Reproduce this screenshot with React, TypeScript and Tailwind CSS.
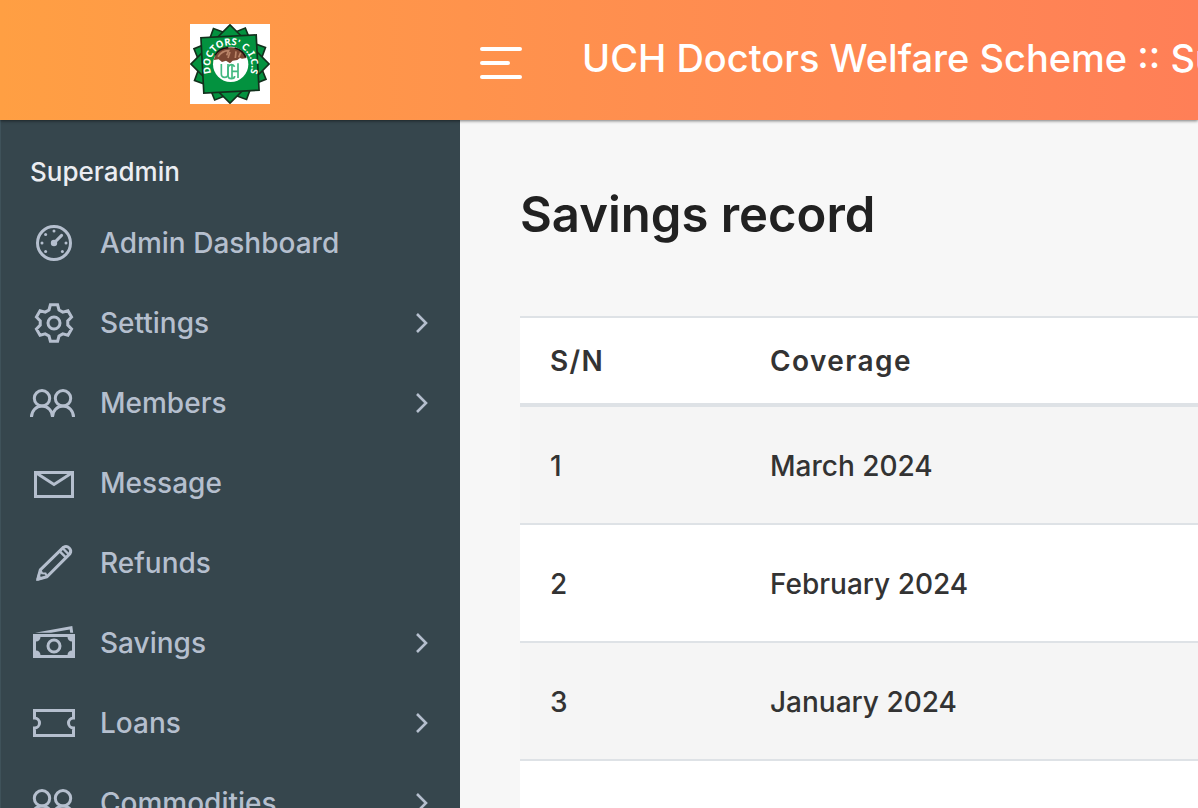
import type { ReactNode } from "react";

type NavItem = {
  label: string;
  icon: ReactNode;
  hasChildren?: boolean;
};

type SavingsRow = {
  sn: number;
  coverage: string;
};

// One tooth per 60 degrees, drawn clockwise from the top
const GEAR_POINTS = [0, 60, 120, 180, 240, 300]
  .flatMap((deg) => {
    const a = (deg * Math.PI) / 180;
    return [
      [-5, 13],
      [-3.6, 18.2],
      [3.6, 18.2],
      [5, 13],
    ].map(([t, r]) => {
      const x = 24 + t * Math.cos(a) + r * Math.sin(a);
      const y = 24 + t * Math.sin(a) - r * Math.cos(a);
      return `${x.toFixed(2)},${y.toFixed(2)}`;
    });
  })
  .join(" ");

function Icon({ children }: { children: ReactNode }) {
  return (
    <svg
      viewBox="0 0 48 48"
      className="size-12 shrink-0"
      fill="none"
      stroke="currentColor"
      strokeWidth="3"
      aria-hidden="true"
    >
      {children}
    </svg>
  );
}

function GaugeIcon() {
  return (
    <Icon>
      <circle cx="24" cy="24" r="16.5" />
      <path d="M24 24 31.6 16.4" strokeLinecap="round" />
      <g fill="currentColor" stroke="none">
        <circle cx="24" cy="24" r="3.2" />
        <circle cx="24" cy="12" r="1.5" />
        <circle cx="12" cy="24" r="1.5" />
        <circle cx="36" cy="24" r="1.5" />
        <circle cx="15.6" cy="15.6" r="1.5" />
        <circle cx="15.6" cy="32.4" r="1.5" />
        <circle cx="32.4" cy="32.4" r="1.5" />
      </g>
    </Icon>
  );
}

function GearIcon() {
  return (
    <Icon>
      <polygon points={GEAR_POINTS} />
      <circle cx="24" cy="24" r="6" />
    </Icon>
  );
}

function PeopleIcon() {
  return (
    <Icon>
      <circle cx="12" cy="19.3" r="7.7" />
      <circle cx="33" cy="19.3" r="7.7" />
      <path d="M1.5 38a10.5 11 0 0 1 21 0a10.5 11 0 0 1 21 0" strokeLinejoin="bevel" />
    </Icon>
  );
}

function MailIcon() {
  return (
    <Icon>
      <rect x="5.5" y="13.5" width="37" height="24" />
      <path d="M5.5 13.5 24 25.5l18.5-12" />
    </Icon>
  );
}

function PencilIcon() {
  return (
    <Icon>
      <path d="M7.8 40.2 10.3 30.8 33.6 8.2a4.7 4.7 0 0 1 6.4 6.4L17 37.7Z" strokeLinejoin="round" />
      <path d="m29.5 12.2 6.5 6.5M33 9.5l5.8 5.8" strokeWidth="2.4" />
      <path d="m10.3 30.8 1.8 3.5 3.4.2 1.5 3.2" strokeWidth="2" />
      <path d="M6 42l2-7 5 5Z" fill="currentColor" stroke="none" />
    </Icon>
  );
}

function CashIcon() {
  return (
    <Icon>
      <path
        d="M3 15h42v24H3ZM10.5 18a4.5 4.5 0 0 1-4.5 4.5v9a4.5 4.5 0 0 1 4.5 4.5h27a4.5 4.5 0 0 1 4.5-4.5v-9a4.5 4.5 0 0 1-4.5-4.5Z"
        fill="currentColor"
        fillRule="evenodd"
        stroke="none"
      />
      <circle cx="24" cy="27" r="6" />
      <path d="M5 13.8 42.3 7l.9 6.8h-3l-.5-3.3L21 13.8Z" fill="currentColor" stroke="none" />
    </Icon>
  );
}

function TicketIcon() {
  return (
    <Icon>
      <path d="M4.5 11.5h39V19a5 5 0 0 0 0 10v7.5h-39V29a5 5 0 0 0 0-10Z" />
    </Icon>
  );
}

function Chevron() {
  return (
    <svg viewBox="0 0 12 20" className="h-5 w-3 shrink-0" fill="none" stroke="currentColor" strokeWidth="2.6" aria-hidden="true">
      <path d="m1 1 9 9-9 9" />
    </svg>
  );
}

function Logo() {
  return (
    <svg viewBox="0 0 240 240" className="size-20 bg-white" role="img" aria-label="Doctors' C.I.C.S">
      <g fill="#03923f" stroke="#12301c" strokeWidth="5">
        <rect x="37" y="37" width="166" height="166" transform="rotate(20 120 120)" />
        <rect x="37" y="37" width="166" height="166" transform="rotate(68 120 120)" />
        <rect x="37" y="37" width="166" height="166" transform="rotate(45 120 120)" />
        <rect x="37" y="37" width="166" height="166" transform="rotate(-3 120 120)" />
      </g>
      <circle cx="122" cy="121" r="53" fill="#fff" />
      <path
        d="M73 102C82 82 98 71 122 70c24 0 42 12 48 32l-14 2-6-2-8 6-14 2-8 8-12-8-12 4-10-8-14 2Z"
        fill="#7a4632"
      />
      <path d="M84 98c8-12 20-18 32-18l-6 14M120 84l-6 18M138 82l-2 20M152 86l-6 14" fill="none" stroke="#b98468" strokeWidth="5" />
      <path d="M75 94c8-14 20-22 40-23M134 72c16 4 28 14 33 28" fill="none" stroke="#1d1210" strokeWidth="5" />
      <g fill="none" stroke="#43b981" strokeWidth="5">
        <path d="M94 120v30q0 10 10 10t10-10v-30" />
        <path d="M134 128q-4-6-10-6t-10 8v24q0 10 10 10t10-8" />
        <path d="M126 120v44M144 118v44M126 142h18" />
      </g>
      <path id="logo-arc" d="M64 147A62 62 0 1 1 180 147" fill="none" />
      <text className="font-['Noto_Sans'] text-[29px] font-bold" fill="#fff" textAnchor="middle">
        <textPath href="#logo-arc" startOffset="50%">
          DOCTORS&apos; C.I.C.S
        </textPath>
      </text>
    </svg>
  );
}

const NAV_ITEMS: NavItem[] = [
  { label: "Admin Dashboard", icon: <GaugeIcon /> },
  { label: "Settings", icon: <GearIcon />, hasChildren: true },
  { label: "Members", icon: <PeopleIcon />, hasChildren: true },
  { label: "Message", icon: <MailIcon /> },
  { label: "Refunds", icon: <PencilIcon /> },
  { label: "Savings", icon: <CashIcon />, hasChildren: true },
  { label: "Loans", icon: <TicketIcon />, hasChildren: true },
  { label: "Commodities", icon: <PeopleIcon />, hasChildren: true },
];

const SAVINGS: SavingsRow[] = [
  { sn: 1, coverage: "March 2024" },
  { sn: 2, coverage: "February 2024" },
  { sn: 3, coverage: "January 2024" },
  { sn: 4, coverage: "December 2023" },
];

function Header() {
  return (
    <header className="relative z-10 flex h-30 shrink-0 items-center bg-linear-to-r from-[#ff9f43] to-[#ff7f57] shadow-[0_1px_3px_rgba(0,0,0,0.5)]">
      <div className="flex w-[460px] shrink-0 justify-center pt-2">
        <Logo />
      </div>
      <button type="button" aria-label="Toggle menu" className="ml-5 flex shrink-0 flex-col gap-2.5 pt-1.5">
        <span className="h-1 w-[42px] rounded-full bg-white" />
        <span className="h-1 w-[30px] rounded-full bg-white" />
        <span className="h-1 w-[42px] rounded-full bg-white" />
      </button>
      <div className="ml-[60px] min-w-0 flex-1 overflow-hidden pb-1 text-[38px] font-medium whitespace-nowrap text-white">
        UCH Doctors Welfare Scheme :: Superadmin
      </div>
    </header>
  );
}

function Sidebar() {
  return (
    <aside className="w-[460px] shrink-0 overflow-hidden border-l border-[#3f525a] bg-[#36464d] pt-[31px] text-[28px] font-medium text-[#b5bfce]">
      <p className="pl-[29px] text-[26px] leading-[42px] text-[#ebedf2]">Superadmin</p>
      <nav className="pt-2.5">
        <ul>
          {NAV_ITEMS.map((item) => (
            <li key={item.label}>
              <a href="#" className="flex h-20 items-center pr-8 pl-[29px]">
                {item.icon}
                <span className="ml-[22px] flex-1">{item.label}</span>
                {item.hasChildren && <Chevron />}
              </a>
            </li>
          ))}
        </ul>
      </nav>
    </aside>
  );
}

function SavingsTable({ rows }: { rows: SavingsRow[] }) {
  return (
    <table className="w-full border-separate border-spacing-0 bg-white text-left text-[#333]">
      <thead>
        <tr className="h-[91px] text-[28px]">
          <th className="w-[220px] border-t-2 border-b-4 border-[#dee2e6] px-7.5 font-semibold tracking-wider">S/N</th>
          <th className="border-t-2 border-b-4 border-[#dee2e6] px-7.5 font-semibold tracking-wider">Coverage</th>
        </tr>
      </thead>
      <tbody>
        {rows.map((row) => (
          <tr key={row.sn} className="h-[118px] text-[28px] font-medium odd:bg-[#f5f5f5]">
            <td className="border-b-2 border-[#dee2e6] px-7.5 pt-0.5">{row.sn}</td>
            <td className="border-b-2 border-[#dee2e6] px-7.5 pt-0.5">{row.coverage}</td>
          </tr>
        ))}
      </tbody>
    </table>
  );
}

export default function App() {
  return (
    <div className="flex h-screen flex-col overflow-hidden bg-[#f7f7f7] font-['Inter',sans-serif]">
      <Header />
      <div className="flex min-h-0 flex-1">
        <Sidebar />
        <main className="min-w-0 flex-1 overflow-hidden pt-15 pl-15">
          <h1 className="mb-[66px] text-[49px] leading-[70px] font-semibold text-[#212121]">Savings record</h1>
          <SavingsTable rows={SAVINGS} />
        </main>
      </div>
    </div>
  );
}
